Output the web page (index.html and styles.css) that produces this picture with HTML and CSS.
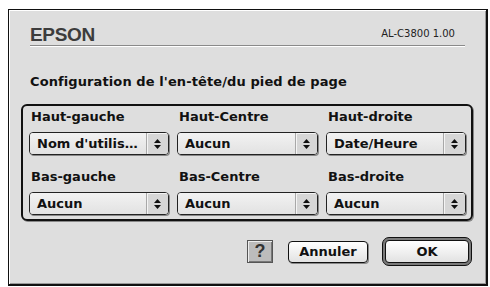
FILE: index.html
```html
<!DOCTYPE html>
<html lang="fr">
<head>
  <meta charset="UTF-8" />
  <title>EPSON</title>
  <link rel="stylesheet" href="styles.css">
</head>
<body>
  <div class="window">
    <div class="header">
      <div class="logo">EPSON</div>
      <div class="version">AL-C3800 1.00</div>
    </div>

    <div class="title">Configuration de l'en-tête/du pied de page</div>

    <div class="group">
      <div class="cell">
        <div class="label">Haut-gauche</div>
        <div class="popup"><span class="value">Nom d'utilis…</span><span class="arrows"><svg width="7" height="10" viewBox="0 0 7 10"><path d="M0 4 L3.5 0 L7 4 Z M0 6 L7 6 L3.5 10 Z" fill="#111"/></svg></span></div>
      </div>
      <div class="cell">
        <div class="label">Haut-Centre</div>
        <div class="popup"><span class="value">Aucun</span><span class="arrows"><svg width="7" height="10" viewBox="0 0 7 10"><path d="M0 4 L3.5 0 L7 4 Z M0 6 L7 6 L3.5 10 Z" fill="#111"/></svg></span></div>
      </div>
      <div class="cell">
        <div class="label">Haut-droite</div>
        <div class="popup"><span class="value">Date/Heure</span><span class="arrows"><svg width="7" height="10" viewBox="0 0 7 10"><path d="M0 4 L3.5 0 L7 4 Z M0 6 L7 6 L3.5 10 Z" fill="#111"/></svg></span></div>
      </div>
      <div class="cell">
        <div class="label">Bas-gauche</div>
        <div class="popup"><span class="value">Aucun</span><span class="arrows"><svg width="7" height="10" viewBox="0 0 7 10"><path d="M0 4 L3.5 0 L7 4 Z M0 6 L7 6 L3.5 10 Z" fill="#111"/></svg></span></div>
      </div>
      <div class="cell">
        <div class="label">Bas-Centre</div>
        <div class="popup"><span class="value">Aucun</span><span class="arrows"><svg width="7" height="10" viewBox="0 0 7 10"><path d="M0 4 L3.5 0 L7 4 Z M0 6 L7 6 L3.5 10 Z" fill="#111"/></svg></span></div>
      </div>
      <div class="cell">
        <div class="label">Bas-droite</div>
        <div class="popup"><span class="value">Aucun</span><span class="arrows"><svg width="7" height="10" viewBox="0 0 7 10"><path d="M0 4 L3.5 0 L7 4 Z M0 6 L7 6 L3.5 10 Z" fill="#111"/></svg></span></div>
      </div>
    </div>

    <div class="buttons">
      <div class="help-button">?</div>
      <div class="button">Annuler</div>
      <div class="default-ring"><div class="button ok">OK</div></div>
    </div>
  </div>
</body>
</html>
```

FILE: styles.css
```css
body {
  margin: 0;
  background: #fff;
  font-family: 'DejaVu Sans', sans-serif;
  color: #111;
}

.window {
  box-sizing: border-box;
  width: 480px;
  height: 277px;
  margin: 9px 0 0 8px;
  background: #dedede;
  border: 1px solid #111;
  border-right-width: 2px;
  border-bottom-width: 2px;
  box-shadow: inset 1px 1px 0 #fff, inset -1px -1px 0 #999;
}

.header {
  display: flex;
  justify-content: space-between;
  align-items: flex-start;
  margin: 14px 21px 0;
  border-bottom: 1px solid #8a8a8a;
  box-shadow: 0 1px 0 #fff;
}

.logo {
  font-family: 'Liberation Sans', sans-serif;
  font-weight: bold;
  font-size: 19px;
  line-height: 21px;
  color: #3c3c3c;
  letter-spacing: -0.3px;
}

.version {
  font-size: 10px;
  line-height: 12px;
  margin-top: 4px;
  margin-right: 10px;
  color: #222;
}

.title {
  margin: 28px 0 0 21px;
  font-weight: bold;
  font-size: 13px;
  line-height: 15px;
  letter-spacing: 0.1px;
}

.group {
  display: grid;
  grid-template-columns: 140px 141px 140px;
  column-gap: 8px;
  row-gap: 14px;
  margin: 15px 13px 0 12px;
  padding: 3px 6px 4px;
  border: 2px solid #111;
  border-radius: 6px;
  box-shadow: 1px 1px 0 #888;
}

.label {
  font-weight: bold;
  font-size: 13px;
  line-height: 15px;
  padding-left: 2px;
  margin-bottom: 8px;
}

.popup {
  box-sizing: border-box;
  display: flex;
  height: 23px;
  border: 1px solid #222;
  border-radius: 4px;
  box-shadow: 1px 1px 0 #888;
  overflow: hidden;
}

.value {
  flex: 1;
  padding-left: 7px;
  font-weight: bold;
  font-size: 13px;
  line-height: 21px;
  background: linear-gradient(#f2f2f2, #e2e2e2);
  white-space: nowrap;
}

.arrows {
  width: 21px;
  display: flex;
  align-items: center;
  justify-content: center;
  background: #d6d6d6;
  border-left: 1px solid #a8a8a8;
  box-shadow: inset 1px 1px 0 #f4f4f4;
}

.buttons {
  display: flex;
  justify-content: flex-end;
  align-items: center;
  margin: 16px 14px 0 0;
  height: 29px;
}

.help-button {
  box-sizing: border-box;
  width: 26px;
  height: 23px;
  margin-right: 15px;
  background: #bcbcbc;
  border: 1px solid #555;
  box-shadow: inset 1px 1px 0 #eee, inset -1px -1px 0 #777;
  text-align: center;
  font-family: 'Liberation Sans', sans-serif;
  font-weight: bold;
  font-size: 18px;
  line-height: 21px;
  color: #333;
}

.button {
  box-sizing: border-box;
  width: 80px;
  height: 22px;
  margin-right: 14px;
  border: 1px solid #111;
  border-radius: 4px;
  background: linear-gradient(#fff, #e2e2e2);
  box-shadow: 1px 1px 0 #888;
  text-align: center;
  font-weight: bold;
  font-size: 13px;
  line-height: 20px;
}

.default-ring {
  box-sizing: border-box;
  width: 90px;
  height: 29px;
  padding: 2px;
  border: 1px solid #111;
  border-radius: 7px;
  background: #7a7a7a;
}

.button.ok {
  width: 84px;
  height: 23px;
  margin: 0;
  box-shadow: none;
  line-height: 21px;
}
```
